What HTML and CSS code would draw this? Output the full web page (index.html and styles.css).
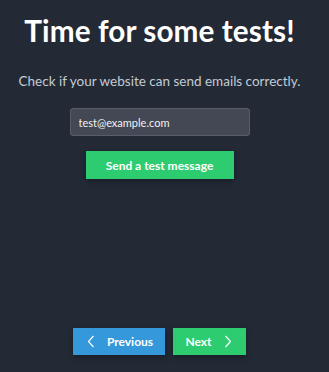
FILE: index.html
```html
<!DOCTYPE html>
<html lang="en">
<head>
  <meta charset="UTF-8">
  <meta name="viewport" content="width=device-width, initial-scale=1.0">
  <title>Email test</title>
  <link rel="stylesheet" href="styles.css">
</head>
<body>
  <div class="page">
    <h1>Time for some tests!</h1>
    <p class="lead">Check if your website can send emails correctly.</p>
    <input type="email" class="email" value="test@example.com">
    <button class="btn btn-green send">Send a test message</button>
    <div class="nav">
      <button class="btn btn-blue prev">
        <svg width="8" height="13" viewBox="0 0 8 13"><path d="M6.5 1 L1.5 6.5 L6.5 12" fill="none" stroke="#fff" stroke-width="1.2"/></svg>
        Previous
      </button>
      <button class="btn btn-green next">
        Next
        <svg width="8" height="13" viewBox="0 0 8 13"><path d="M1.5 1 L6.5 6.5 L1.5 12" fill="none" stroke="#fff" stroke-width="1.2"/></svg>
      </button>
    </div>
  </div>
</body>
</html>
```

FILE: styles.css
```css
html, body { margin: 0; background: #232a36; }
body { font-family: Lato, "Open Sans", sans-serif; color: #fff; }

.page {
  display: flex;
  flex-direction: column;
  align-items: center;
  height: 372px;
  box-sizing: border-box;
  padding: 0 10px 17px 0;
}

h1 {
  font-size: 29.7px;
  font-weight: 700;
  margin: 13px 0 0;
  line-height: 35px;
  letter-spacing: 0.1px;
}

.lead {
  font-size: 13.5px;
  color: #c4cbd4;
  margin: 24px 0 0;
  line-height: 18px;
}

.email {
  margin-top: 18px;
  width: 180px;
  height: 28px;
  box-sizing: border-box;
  background: #434854;
  border: 1px solid #585d69;
  border-radius: 3px;
  color: #f2f2f2;
  font-family: inherit;
  font-size: 11px;
  padding: 0 8px;
}

.btn {
  border: none;
  color: #fff;
  font-family: inherit;
  font-weight: 700;
  font-size: 12px;
  height: 27px;
  display: flex;
  align-items: center;
  justify-content: center;
  box-shadow: 0 2px 6px rgba(0, 0, 0, 0.35);
  cursor: pointer;
}
.btn-green { background: #2ecc71; }
.btn-blue { background: #3498db; }

.send {
  margin-top: 15px;
  width: 148px;
  height: 28px;
}

.nav {
  margin-top: auto;
  display: flex;
  gap: 8px;
}
.prev { width: 92px; gap: 12px; padding-right: 4px; }
.next { width: 73px; gap: 12px; padding-left: 4px; }
```
